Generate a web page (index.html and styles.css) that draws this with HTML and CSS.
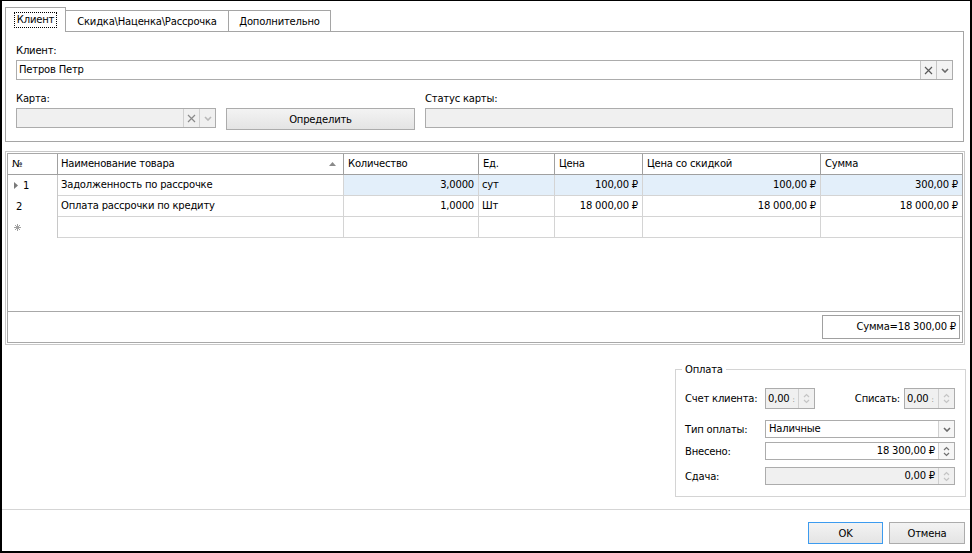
FILE: index.html
```html
<!DOCTYPE html>
<html lang="ru">
<head>
<meta charset="utf-8">
<title>Клиент</title>
<link rel="stylesheet" href="styles.css">
</head>
<body>
<div class="window">
  <div class="top">
    <div class="tabstrip">
      <div class="tab tab-active"><span class="focus">Клиент</span></div>
      <div class="tab tab-2">Скидка\Наценка\Рассрочка</div>
      <div class="tab tab-3">Дополнительно</div>
    </div>
    <div class="panel">
      <div class="label">Клиент:</div>
      <div class="field">
        <div class="field-text">Петров Петр</div>
        <div class="fbtn"><svg width="9" height="9" viewBox="0 0 9 9"><path d="M1 1L8 8M8 1L1 8" stroke="#5a5a5a" stroke-width="1.2" fill="none"/></svg></div>
        <div class="fbtn"><svg width="8" height="5" viewBox="0 0 8 5"><path d="M1 1L4 4L7 1" stroke="#6a6a6a" stroke-width="1.6" fill="none"/></svg></div>
      </div>
      <div class="card-grid">
        <div class="label">Карта:</div>
        <div></div>
        <div class="label">Статус карты:</div>
        <div class="field disabled">
          <div class="field-text"></div>
          <div class="fbtn"><svg width="9" height="9" viewBox="0 0 9 9"><path d="M1 1L8 8M8 1L1 8" stroke="#8a8a8a" stroke-width="1.2" fill="none"/></svg></div>
          <div class="fbtn"><svg width="8" height="5" viewBox="0 0 8 5"><path d="M1 1L4 4L7 1" stroke="#b8b8b8" stroke-width="1.6" fill="none"/></svg></div>
        </div>
        <div class="btn">Определить</div>
        <div class="field disabled"></div>
      </div>
    </div>
  </div>

  <div class="grid-frame">
    <div class="grid-inner">
      <div class="grow head">
        <div class="hc">№</div>
        <div class="hc hc-sort"><span>Наименование товара</span><svg width="7" height="4" viewBox="0 0 7 4"><path d="M0 4L3.5 0L7 4Z" fill="#8a8a8a"/></svg></div>
        <div class="hc">Количество</div>
        <div class="hc">Ед.</div>
        <div class="hc">Цена</div>
        <div class="hc">Цена со скидкой</div>
        <div class="hc hc-last">Сумма</div>
      </div>
      <div class="grow data sel">
        <div class="ind ind-cur"><svg width="4" height="7" viewBox="0 0 4 7"><path d="M0 0L4 3.5L0 7Z" fill="#7a7a7a"/></svg><span>1</span></div>
        <div class="dc">Задолженность по рассрочке</div>
        <div class="dc num">3,0000</div>
        <div class="dc">сут</div>
        <div class="dc num">100,00 ₽</div>
        <div class="dc num">100,00 ₽</div>
        <div class="dc num last">300,00 ₽</div>
      </div>
      <div class="grow data">
        <div class="ind ind-2">2</div>
        <div class="dc">Оплата рассрочки по кредиту</div>
        <div class="dc num">1,0000</div>
        <div class="dc">Шт</div>
        <div class="dc num">18 000,00 ₽</div>
        <div class="dc num">18 000,00 ₽</div>
        <div class="dc num last">18 000,00 ₽</div>
      </div>
      <div class="grow data">
        <div class="ind ind-new"><svg width="7" height="7" viewBox="0 0 7 7"><path d="M3.5 0V7M0 3.5H7M1 1L6 6M6 1L1 6" stroke="#a0a0a0" stroke-width="1" fill="none"/></svg></div>
        <div class="dc"></div>
        <div class="dc"></div>
        <div class="dc"></div>
        <div class="dc"></div>
        <div class="dc"></div>
        <div class="dc last"></div>
      </div>
      <div class="grid-space"></div>
      <div class="grid-footer">
        <div class="sumbox">Сумма=18 300,00 ₽</div>
      </div>
    </div>
  </div>

  <div class="bottom">
    <fieldset class="group">
      <legend>Оплата</legend>
      <div class="prow prow-1">
        <div class="plabel">Счет клиента:</div>
        <div class="spin spin-small disabled">
          <div class="spin-text">0,00<span class="cut">:</span></div>
          <div class="spin-btn"><svg width="7" height="11" viewBox="0 0 7 11"><path d="M1 4L3.5 1.5L6 4M1 7L3.5 9.5L6 7" stroke="#c4c4c4" stroke-width="1.2" fill="none"/></svg></div>
        </div>
        <div class="plabel-right">Списать:</div>
        <div class="spin spin-small spin-small-2 disabled">
          <div class="spin-text">0,00<span class="cut">:</span></div>
          <div class="spin-btn"><svg width="7" height="11" viewBox="0 0 7 11"><path d="M1 4L3.5 1.5L6 4M1 7L3.5 9.5L6 7" stroke="#c4c4c4" stroke-width="1.2" fill="none"/></svg></div>
        </div>
      </div>
      <div class="prow prow-2">
        <div class="plabel">Тип оплаты:</div>
        <div class="spin wide">
          <div class="spin-text left">Наличные</div>
          <div class="spin-btn"><svg width="8" height="5" viewBox="0 0 8 5"><path d="M1 1L4 4L7 1" stroke="#6a6a6a" stroke-width="1.6" fill="none"/></svg></div>
        </div>
      </div>
      <div class="prow prow-3">
        <div class="plabel">Внесено:</div>
        <div class="spin wide">
          <div class="spin-text">18 300,00 ₽</div>
          <div class="spin-btn"><svg width="7" height="11" viewBox="0 0 7 11"><path d="M1 4L3.5 1.5L6 4M1 7L3.5 9.5L6 7" stroke="#707070" stroke-width="1.2" fill="none"/></svg></div>
        </div>
      </div>
      <div class="prow prow-4">
        <div class="plabel">Сдача:</div>
        <div class="spin wide disabled">
          <div class="spin-text">0,00 ₽</div>
          <div class="spin-btn"><svg width="7" height="11" viewBox="0 0 7 11"><path d="M1 4L3.5 1.5L6 4M1 7L3.5 9.5L6 7" stroke="#c4c4c4" stroke-width="1.2" fill="none"/></svg></div>
        </div>
      </div>
    </fieldset>
  </div>

  <div class="sep"></div>

  <div class="buttons">
    <div class="btn dlg-btn default">OK</div>
    <div class="btn dlg-btn cancel">Отмена</div>
  </div>
</div>
</body>
</html>
```

FILE: styles.css
```css
* { box-sizing: border-box; }
html, body { margin: 0; padding: 0; background: #fff; }
body {
  font-family: "DejaVu Sans", "Liberation Sans", sans-serif;
  font-size: 10px;
  letter-spacing: -0.2px;
  color: #000;
}
.window {
  width: 972px;
  height: 553px;
  border: solid #000;
  border-width: 1px 2px 2px 2px;
  background: #fff;
  display: flex;
  flex-direction: column;
  overflow: hidden;
}

/* tabs */
.top { padding: 6px 6px 0 3px; }
.tabstrip { display: flex; align-items: flex-end; height: 24px; }
.tab {
  height: 21px;
  border: 1px solid #a5a5a5;
  border-bottom: none;
  background: #fff;
  display: flex;
  align-items: center;
  justify-content: center;
  white-space: nowrap;
}
.tab-active {
  width: 61px;
  height: 25px;
  margin-bottom: -1px;
  position: relative;
  z-index: 1;
  padding-bottom: 1px;
}
.focus { outline: 1px dotted #000; outline-offset: 1px; padding: 0 1px; line-height: 12px; }
.tab-2 { width: 163px; border-left: none; }
.tab-3 { width: 102px; border-left: none; }

.panel {
  height: 111px;
  border: 1px solid #a5a5a5;
  padding: 12px 10px 0 10px;
}
.label { line-height: 13px; height: 13px; margin-bottom: 3px; white-space: nowrap; }
.field {
  height: 20px;
  border: 1px solid #acacac;
  background: #fff;
  display: flex;
}
.field.disabled { background: #f0f0f0; }
.field-text { flex: 1; padding-left: 2px; line-height: 18px; }
.fbtn {
  width: 16px;
  border-left: 1px solid #c6c6c6;
  background: #f3f3f3;
  display: flex;
  align-items: center;
  justify-content: center;
}
.field.disabled .fbtn { background: #f0f0f0; border-left-color: #d0d0d0; }
.card-grid {
  margin-top: 12px;
  display: grid;
  grid-template-columns: 200px 189px 1fr;
  column-gap: 10px;
}
.card-grid .label { margin-bottom: 3px; }
.btn {
  height: 22px;
  border: 1px solid #acacac;
  background: linear-gradient(#f3f3f3, #e4e4e4);
  display: flex;
  align-items: center;
  justify-content: center;
}

/* grid */
.grid-frame {
  margin: 9px 5px 0 3px;
  height: 194px;
  border: 1px solid #c8c8c8;
  padding: 1px;
}
.grid-inner {
  height: 100%;
  border: 1px solid #a8a8a8;
  display: flex;
  flex-direction: column;
}
.grow {
  display: grid;
  grid-template-columns: 50px 286px 135px 76px 88px 178px 141px;
}
.head { height: 21px; border-bottom: 1px solid #a0a0a0; }
.hc {
  border-right: 1px solid #a0a0a0;
  padding-left: 4px;
  line-height: 20px;
  white-space: nowrap;
}
.hc-last { border-right: none; }
.hc-sort { display: flex; align-items: center; justify-content: space-between; padding-right: 7px; padding-left: 3px; }
.data { height: 21px; }
.dc {
  border-right: 1px solid #d4d4d4;
  border-bottom: 1px solid #d4d4d4;
  line-height: 20px;
  padding: 0 4px 0 3px;
  white-space: nowrap;
}
.dc.last { border-right: none; }
.num { text-align: right; }
.sel .dc:nth-child(n+3) { background: #e3effa; }
.ind {
  border-right: 1px solid #c8c8c8;
  display: flex;
  align-items: center;
  line-height: 20px;
}
.ind-cur { padding-left: 6px; }
.ind-cur span { margin-left: 5px; }
.ind-2 { padding-left: 8px; }
.ind-new { padding-left: 6px; }
.grid-space { flex: 1; }
.grid-footer {
  height: 31px;
  border-top: 1px solid #a8a8a8;
  display: flex;
  justify-content: flex-end;
  padding: 3px 2px 0 0;
}
.sumbox {
  width: 138px;
  height: 24px;
  border: 1px solid #a0a0a0;
  text-align: right;
  padding-right: 3px;
  line-height: 22px;
}

/* payment group */
.bottom { display: flex; justify-content: flex-end; padding-right: 4px; margin-top: 17px; }
.group {
  width: 291px;
  height: 135px;
  margin: 0;
  border: 1px solid #d4d4d4;
  padding: 0 10px 0 9px;
}
.group legend {
  padding: 0 3px;
  margin-left: -3px;
  line-height: 15px;
}
.prow { display: flex; align-items: center; }
.prow-1 { margin-top: 11px; height: 21px; }
.prow-2 { margin-top: 11px; }
.prow-3 { margin-top: 4px; }
.prow-4 { margin-top: 7px; }
.plabel { width: 80px; white-space: nowrap; }
.plabel-right { margin-left: auto; margin-right: 4px; white-space: nowrap; }
.spin {
  height: 18px;
  border: 1px solid #acacac;
  background: #fff;
  display: flex;
}
.spin.disabled { background: #f0f0f0; }
.spin-small { width: 50px; height: 21px; }
.spin-small-2 { width: 51px; }
.wide { flex: 1; }
.spin-text {
  flex: 1;
  text-align: right;
  padding: 0 3px;
  line-height: 16px;
  white-space: nowrap;
}
.spin-small .spin-text { text-align: left; line-height: 19px; padding: 0 0 0 2px; }
.cut { font-size: 7px; color: #666; margin-left: 3px; }
.spin-text.left { text-align: left; padding-left: 3px; }
.spin-btn {
  width: 16px;
  border-left: 1px solid #d0d0d0;
  display: flex;
  align-items: center;
  justify-content: center;
  background: #f6f6f6;
}
.spin.disabled .spin-btn { background: #f0f0f0; }

.sep { margin-top: 12px; height: 1px; background: #d5d5d5; }
.buttons { margin-top: 12px; display: flex; justify-content: flex-end; gap: 6px; padding-right: 5px; }
.dlg-btn { width: 75px; }
.dlg-btn.cancel { width: 76px; }
.dlg-btn.default { border-color: #3c9bef; }
```
